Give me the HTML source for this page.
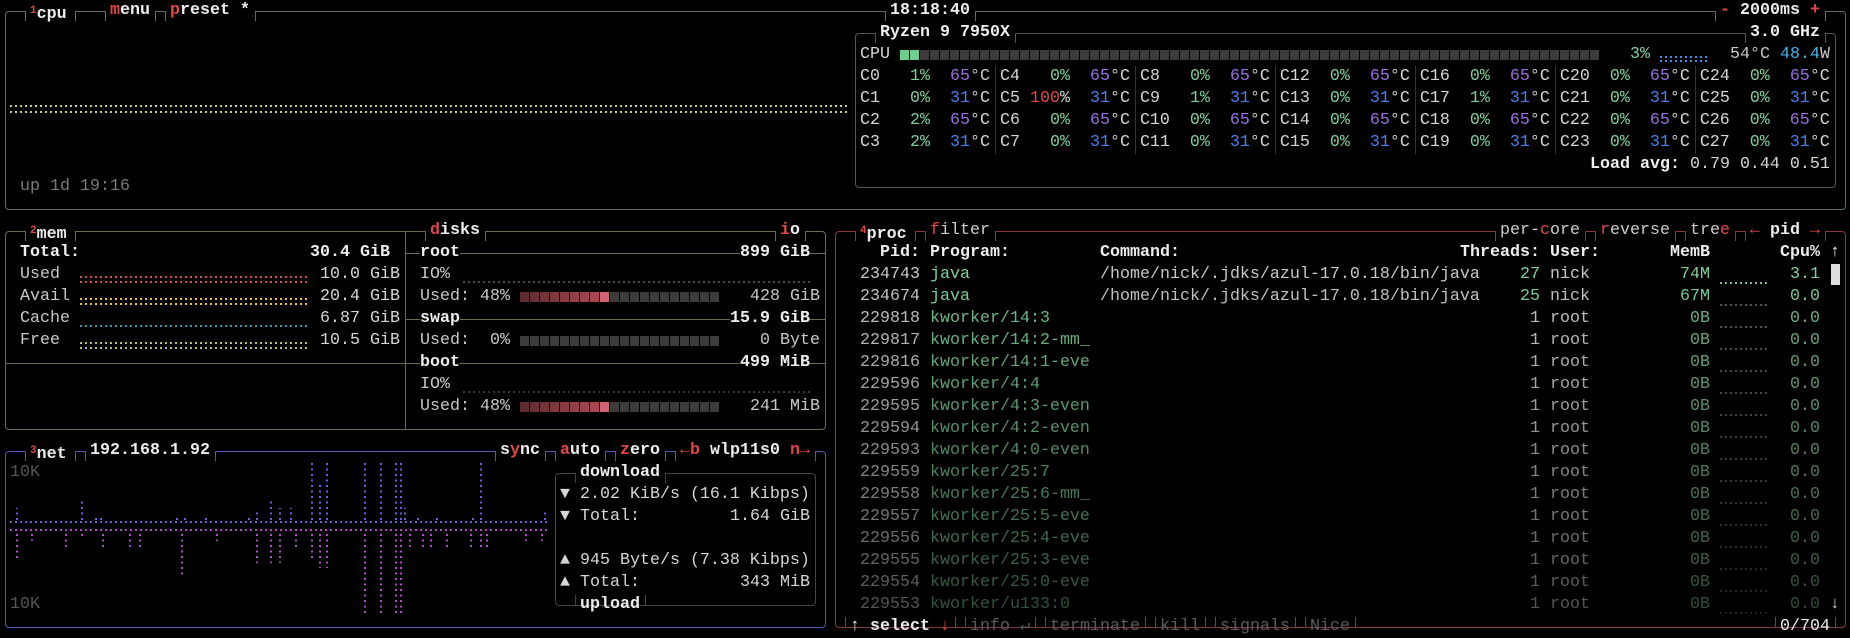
<!DOCTYPE html>
<html><head><meta charset="utf-8"><style>
html,body{margin:0;padding:0;background:#000;width:1850px;height:638px;overflow:hidden}
body{position:relative;font-family:"Liberation Mono","DejaVu Sans Mono",monospace;font-size:16.667px;color:#d6d6d6}
.t{position:absolute;white-space:pre;line-height:22px;height:22px}
.r{text-align:right}
.box{position:absolute;box-sizing:border-box;border:1px solid;border-radius:4px}
.hl{position:absolute;height:1px}
.vl{position:absolute;width:1px}
.tt{position:absolute;height:10px;box-sizing:border-box;border-style:solid;border-width:0 1px;background:#000}
.tt>span{position:absolute;left:4px;top:-11px;line-height:22px;white-space:pre;font-weight:bold;color:#eee}
.bt{position:absolute;height:10px;box-sizing:border-box;border-style:solid;border-width:0 1px;background:#000}
.bt>span{position:absolute;left:4px;top:-1px;line-height:22px;white-space:pre;color:#5c5c5c}
.sup{font-size:11px;vertical-align:5px;color:#e04848}
.red{color:#e04848}
.w{color:#eee;font-weight:bold}
.g{color:#7fcf9a}.tp{color:#9a6fe0}.tb{color:#4a7fee}.dg{color:#c8c8c8}
.bg{background:#000}
.dot{position:absolute;height:2px;background-image:linear-gradient(to right,var(--c) 0 2px,transparent 2px 5px);background-size:5px 2px}
.bar{position:absolute;height:10px;background-image:repeating-linear-gradient(to right,#3c3c3c 0 9px,#000 9px 10px)}
.pr{position:absolute;left:0;width:1850px;height:22px}
.pr .t{top:0}
</style></head><body>

<!-- CPU box -->
<div class="box" style="left:5px;top:11px;width:1841px;height:199px;border-color:#5d6f60"></div>
<div class="box" style="left:855px;top:33px;width:981px;height:155px;border-color:#4f5a52"></div>
<div class="tt" style="left:25px;top:11px;width:51px;border-color:#5d6f60"><span><span class="sup">1</span>cpu</span></div>
<div class="tt" style="left:105px;top:11px;width:51px;border-color:#5d6f60"><span><span class="red">m</span>enu</span></div>
<div class="tt" style="left:165px;top:11px;width:91px;border-color:#5d6f60"><span><span class="red">p</span>reset *</span></div>
<div class="tt" style="left:885px;top:11px;width:91px;border-color:#5d6f60"><span>18:18:40</span></div>
<div class="tt" style="left:1715px;top:11px;width:111px;border-color:#5d6f60"><span><span class="red">-</span> 2000ms <span class="red">+</span></span></div>
<div class="tt" style="left:875px;top:33px;width:141px;border-color:#4f5a52"><span>Ryzen 9 7950X</span></div>
<div class="tt" style="left:1745px;top:33px;width:81px;border-color:#4f5a52"><span>3.0 GHz</span></div>

<div class="dot" style="--c:#c4cf80;left:10px;top:105px;width:840px"></div>
<div class="dot" style="--c:#c4cf80;left:10px;top:111px;width:840px"></div>
<span class="t" style="left:20px;top:176px;color:#7a7a7a">up 1d 19:16</span>

<span class="t" style="left:860px;top:44px">CPU</span>
<div class="bar" style="left:900px;top:50px;width:700px"></div>
<div class="bar" style="left:900px;top:50px;width:19px;background-image:repeating-linear-gradient(to right,#6fcf8f 0 9px,#000 9px 10px)"></div>
<span class="t g" style="left:1630px;top:44px">3%</span>
<div class="dot" style="--c:#3a8fe8;left:1660px;top:56px;width:50px"></div>
<div class="dot" style="--c:#3a8fe8;left:1660px;top:60px;width:50px"></div>
<span class="t dg" style="left:1730px;top:44px">54°C <span style="color:#3fb4ec">48.4</span>W</span>

<span class="t" style="left:860px;top:66px">C0   <span class="g">1%</span>  <span class="tp">65</span><span class="dg">°C</span> C4   <span class="g">0%</span>  <span class="tp">65</span>°C C8   <span class="g">0%</span>  <span class="tp">65</span>°C C12  <span class="g">0%</span>  <span class="tp">65</span>°C C16  <span class="g">0%</span>  <span class="tp">65</span>°C C20  <span class="g">0%</span>  <span class="tp">65</span>°C C24  <span class="g">0%</span>  <span class="tp">65</span>°C</span>
<span class="t" style="left:860px;top:88px">C1   <span class="g">0%</span>  <span class="tb">31</span>°C C5 <span class="red">100</span>%  <span class="tb">31</span>°C C9   <span class="g">1%</span>  <span class="tb">31</span>°C C13  <span class="g">0%</span>  <span class="tb">31</span>°C C17  <span class="g">1%</span>  <span class="tb">31</span>°C C21  <span class="g">0%</span>  <span class="tb">31</span>°C C25  <span class="g">0%</span>  <span class="tb">31</span>°C</span>
<span class="t" style="left:860px;top:110px">C2   <span class="g">2%</span>  <span class="tp">65</span>°C C6   <span class="g">0%</span>  <span class="tp">65</span>°C C10  <span class="g">0%</span>  <span class="tp">65</span>°C C14  <span class="g">0%</span>  <span class="tp">65</span>°C C18  <span class="g">0%</span>  <span class="tp">65</span>°C C22  <span class="g">0%</span>  <span class="tp">65</span>°C C26  <span class="g">0%</span>  <span class="tp">65</span>°C</span>
<span class="t" style="left:860px;top:132px">C3   <span class="g">2%</span>  <span class="tb">31</span>°C C7   <span class="g">0%</span>  <span class="tb">31</span>°C C11  <span class="g">0%</span>  <span class="tb">31</span>°C C15  <span class="g">0%</span>  <span class="tb">31</span>°C C19  <span class="g">0%</span>  <span class="tb">31</span>°C C23  <span class="g">0%</span>  <span class="tb">31</span>°C C27  <span class="g">0%</span>  <span class="tb">31</span>°C</span>
<div class="vl" style="left:995px;top:66px;height:88px;background:#333"></div>
<div class="vl" style="left:1135px;top:66px;height:88px;background:#333"></div>
<div class="vl" style="left:1275px;top:66px;height:88px;background:#333"></div>
<div class="vl" style="left:1415px;top:66px;height:88px;background:#333"></div>
<div class="vl" style="left:1555px;top:66px;height:88px;background:#333"></div>
<div class="vl" style="left:1695px;top:66px;height:88px;background:#333"></div>
<span class="t" style="left:1590px;top:154px"><span class="w">Load avg:</span> 0.79 0.44 0.51</span>

<!-- MEM box -->
<div class="box" style="left:5px;top:231px;width:821px;height:199px;border-color:#6c6c4c"></div>
<div class="vl" style="left:405px;top:231px;height:198px;background:#6c6c4c"></div>
<div class="hl" style="left:5px;top:363px;width:400px;background:#6c6c4c"></div>
<div class="hl" style="left:405px;top:253px;width:420px;background:#6c6c4c"></div>
<div class="hl" style="left:405px;top:319px;width:420px;background:#6c6c4c"></div>
<div class="hl" style="left:405px;top:363px;width:420px;background:#6c6c4c"></div>
<div class="tt" style="left:25px;top:231px;width:51px;border-color:#6c6c4c"><span><span class="sup">2</span>mem</span></div>
<div class="tt" style="left:425px;top:231px;width:61px;border-color:#6c6c4c"><span><span class="red">d</span>isks</span></div>
<div class="tt" style="left:775px;top:231px;width:31px;border-color:#6c6c4c"><span><span class="red">i</span>o</span></div>

<span class="t w" style="left:20px;top:242px">Total:</span>
<span class="t w" style="left:310px;top:242px">30.4 GiB</span>
<span class="t dg" style="left:20px;top:264px">Used</span>
<div class="dot" style="--c:#d65050;left:80px;top:276px;width:230px"></div>
<div class="dot" style="--c:#d65050;left:80px;top:281px;width:230px"></div>
<span class="t" style="left:320px;top:264px">10.0 GiB</span>
<span class="t dg" style="left:20px;top:286px">Avail</span>
<div class="dot" style="--c:#e8c040;left:80px;top:298px;width:230px"></div>
<div class="dot" style="--c:#e8c040;left:80px;top:303px;width:230px"></div>
<span class="t" style="left:320px;top:286px">20.4 GiB</span>
<span class="t dg" style="left:20px;top:308px">Cache</span>
<div class="dot" style="--c:#3a98b8;left:80px;top:325px;width:230px"></div>
<span class="t" style="left:320px;top:308px">6.87 GiB</span>
<span class="t dg" style="left:20px;top:330px">Free</span>
<div class="dot" style="--c:#b4c468;left:80px;top:342px;width:230px"></div>
<div class="dot" style="--c:#b4c468;left:80px;top:347px;width:230px"></div>
<span class="t" style="left:320px;top:330px">10.5 GiB</span>

<span class="t w bg" style="left:420px;top:242px">root</span>
<span class="t w bg" style="left:740px;top:242px">899 GiB</span>
<span class="t dg" style="left:420px;top:264px">IO%</span>
<div class="dot" style="--c:#4a4a4a;left:463px;top:281px;width:350px"></div>
<span class="t dg" style="left:420px;top:286px">Used: 48%</span>
<div class="bar" style="left:520px;top:292px;width:200px"></div>
<div class="bar" style="left:520px;top:292px;width:89px;background-image:repeating-linear-gradient(to right,transparent 0 9px,#000 9px 10px),linear-gradient(to right,#5a2a2e,#b84a5a)"></div>
<div style="position:absolute;left:600px;top:292px;width:9px;height:10px;background:#d06474"></div>
<span class="t dg" style="left:750px;top:286px">428 GiB</span>
<span class="t w bg" style="left:420px;top:308px">swap</span>
<span class="t w bg" style="left:730px;top:308px">15.9 GiB</span>
<span class="t dg" style="left:420px;top:330px">Used:  0%</span>
<div class="bar" style="left:520px;top:336px;width:200px"></div>
<span class="t dg" style="left:760px;top:330px">0 Byte</span>
<span class="t w bg" style="left:420px;top:352px">boot</span>
<span class="t w bg" style="left:740px;top:352px">499 MiB</span>
<span class="t dg" style="left:420px;top:374px">IO%</span>
<div class="dot" style="--c:#3a3a3a;left:463px;top:391px;width:350px"></div>
<span class="t dg" style="left:420px;top:396px">Used: 48%</span>
<div class="bar" style="left:520px;top:402px;width:200px"></div>
<div class="bar" style="left:520px;top:402px;width:89px;background-image:repeating-linear-gradient(to right,transparent 0 9px,#000 9px 10px),linear-gradient(to right,#5a2a2e,#b84a5a)"></div>
<div style="position:absolute;left:600px;top:402px;width:9px;height:10px;background:#d06474"></div>
<span class="t dg" style="left:750px;top:396px">241 MiB</span>

<!-- NET box -->
<div class="box" style="left:5px;top:451px;width:821px;height:177px;border-color:#5a58a8"></div>
<div class="tt" style="left:25px;top:451px;width:51px;border-color:#5a58a8"><span><span class="sup">3</span>net</span></div>
<div class="tt" style="left:85px;top:451px;width:131px;border-color:#5a58a8"><span>192.168.1.92</span></div>
<div class="tt" style="left:495px;top:451px;width:51px;border-color:#5a58a8"><span>s<span class="red">y</span>nc</span></div>
<div class="tt" style="left:555px;top:451px;width:51px;border-color:#5a58a8"><span><span class="red">a</span>uto</span></div>
<div class="tt" style="left:615px;top:451px;width:51px;border-color:#5a58a8"><span><span class="red">z</span>ero</span></div>
<div class="tt" style="left:675px;top:451px;width:141px;border-color:#5a58a8"><span><span class="red">←b</span> wlp11s0 <span class="red">n→</span></span></div>
<span class="t" style="left:10px;top:462px;color:#555">10K</span>
<span class="t" style="left:10px;top:594px;color:#555">10K</span>
<svg style="position:absolute;left:0;top:0" width="560" height="638">
<g stroke="#6a62dc" stroke-width="2" stroke-dasharray="2 3.5">
<line x1="10" y1="522" x2="550" y2="522" stroke-dasharray="2 3"/>
<line x1="17" y1="520" x2="17" y2="508"/><line x1="82" y1="520" x2="82" y2="501"/><line x1="96" y1="520" x2="96" y2="515"/><line x1="101" y1="520" x2="101" y2="515"/><line x1="177" y1="520" x2="177" y2="515"/><line x1="185" y1="520" x2="185" y2="515"/><line x1="206" y1="520" x2="206" y2="515"/><line x1="249" y1="520" x2="249" y2="515"/><line x1="257" y1="520" x2="257" y2="512"/><line x1="271" y1="520" x2="271" y2="501"/><line x1="280" y1="520" x2="280" y2="508"/><line x1="291" y1="520" x2="291" y2="508"/><line x1="312" y1="520" x2="312" y2="463"/><line x1="320" y1="520" x2="320" y2="485"/><line x1="327" y1="520" x2="327" y2="463"/><line x1="365" y1="520" x2="365" y2="463"/><line x1="381" y1="520" x2="381" y2="463"/><line x1="396" y1="520" x2="396" y2="463"/><line x1="401" y1="520" x2="401" y2="463"/><line x1="405" y1="520" x2="405" y2="508"/><line x1="418" y1="520" x2="418" y2="515"/><line x1="437" y1="520" x2="437" y2="515"/><line x1="473" y1="520" x2="473" y2="515"/><line x1="481" y1="520" x2="481" y2="463"/><line x1="545" y1="520" x2="545" y2="512"/>
</g>
<g stroke="#b04cc4" stroke-width="2" stroke-dasharray="2 3.5">
<line x1="10" y1="530" x2="550" y2="530" stroke-dasharray="2 3"/>
<line x1="17" y1="534" x2="17" y2="558"/><line x1="32" y1="534" x2="32" y2="541"/><line x1="66" y1="534" x2="66" y2="547"/><line x1="82" y1="534" x2="82" y2="537"/><line x1="103" y1="534" x2="103" y2="547"/><line x1="130" y1="534" x2="130" y2="547"/><line x1="140" y1="534" x2="140" y2="547"/><line x1="182" y1="534" x2="182" y2="575"/><line x1="217" y1="534" x2="217" y2="541"/><line x1="257" y1="534" x2="257" y2="563"/><line x1="271" y1="534" x2="271" y2="563"/><line x1="280" y1="534" x2="280" y2="563"/><line x1="296" y1="534" x2="296" y2="547"/><line x1="312" y1="534" x2="312" y2="560"/><line x1="320" y1="534" x2="320" y2="568"/><line x1="327" y1="534" x2="327" y2="568"/><line x1="365" y1="534" x2="365" y2="613"/><line x1="381" y1="534" x2="381" y2="613"/><line x1="396" y1="534" x2="396" y2="613"/><line x1="401" y1="534" x2="401" y2="613"/><line x1="410" y1="534" x2="410" y2="547"/><line x1="423" y1="534" x2="423" y2="547"/><line x1="431" y1="534" x2="431" y2="547"/><line x1="447" y1="534" x2="447" y2="547"/><line x1="471" y1="534" x2="471" y2="547"/><line x1="481" y1="534" x2="481" y2="547"/><line x1="487" y1="534" x2="487" y2="547"/><line x1="526" y1="534" x2="526" y2="541"/><line x1="542" y1="534" x2="542" y2="541"/>
</g></svg>
<div class="box" style="left:555px;top:473px;width:261px;height:133px;border-color:#444"></div>
<div class="tt" style="left:575px;top:473px;width:91px;border-color:#444"><span>download</span></div>
<div class="bt" style="left:575px;top:595px;width:71px;border-color:#444"><span class="w" style="color:#eee">upload</span></div>
<span class="t" style="left:560px;top:484px">▼ 2.02 KiB/s (16.1 Kibps)</span>
<span class="t" style="left:560px;top:506px">▼ Total:</span>
<span class="t" style="left:730px;top:506px">1.64 GiB</span>
<span class="t" style="left:560px;top:550px">▲ 945 Byte/s (7.38 Kibps)</span>
<span class="t" style="left:560px;top:572px">▲ Total:</span>
<span class="t" style="left:740px;top:572px">343 MiB</span>

<!-- PROC box -->
<div class="box" style="left:835px;top:231px;width:1011px;height:397px;border-color:#883a3a"></div>
<div class="tt" style="left:855px;top:231px;width:61px;border-color:#883a3a"><span><span class="sup">4</span>proc</span></div>
<div class="tt" style="left:925px;top:231px;width:71px;border-color:#883a3a"><span style="color:#ccc;font-weight:normal"><span class="red">f</span>ilter</span></div>
<div class="tt" style="left:1495px;top:231px;width:91px;border-color:#883a3a"><span style="color:#ccc;font-weight:normal">per-<span class="red">c</span>ore</span></div>
<div class="tt" style="left:1595px;top:231px;width:81px;border-color:#883a3a"><span style="color:#ccc;font-weight:normal"><span class="red">r</span>everse</span></div>
<div class="tt" style="left:1685px;top:231px;width:51px;border-color:#883a3a"><span style="color:#ccc;font-weight:normal">tre<span class="red">e</span></span></div>
<div class="tt" style="left:1745px;top:231px;width:81px;border-color:#883a3a"><span><span class="red">←</span> pid <span class="red">→</span></span></div>

<div class="bt" style="left:845px;top:617px;width:111px;border-color:#883a3a"><span style="color:#eee">↑ <b>select</b> <span class="red">↓</span></span></div>
<div class="bt" style="left:965px;top:617px;width:71px;border-color:#883a3a"><span>info ↵</span></div>
<div class="bt" style="left:1045px;top:617px;width:101px;border-color:#883a3a"><span>terminate</span></div>
<div class="bt" style="left:1155px;top:617px;width:51px;border-color:#883a3a"><span>kill</span></div>
<div class="bt" style="left:1215px;top:617px;width:81px;border-color:#883a3a"><span>signals</span></div>
<div class="bt" style="left:1305px;top:617px;width:51px;border-color:#883a3a"><span>Nice</span></div>
<div class="bt" style="left:1775px;top:617px;width:61px;border-color:#883a3a"><span style="color:#eee">0/704</span></div>

<div class="pr" style="top:242px;font-weight:bold;color:#eee">
<span class="t r" style="left:850px;width:70px">Pid:</span><span class="t" style="left:930px">Program:</span><span class="t" style="left:1100px">Command:</span><span class="t r" style="left:1450px;width:90px">Threads:</span><span class="t" style="left:1550px">User:</span><span class="t r" style="left:1650px;width:60px">MemB</span><span class="t r" style="left:1770px;width:50px">Cpu%</span><span class="t" style="left:1830px">↑</span></div>
<div style="position:absolute;left:1831px;top:264px;width:9px;height:21px;background:#ddd"></div>
<span class="t" style="left:1830px;top:594px">↓</span>

<div class="pr" style="top:264px"><span class="t r dg" style="left:850px;width:70px">234743</span><span class="t" style="left:930px;color:#7fd39a">java</span><span class="t dg" style="left:1100px">/home/nick/.jdks/azul-17.0.18/bin/java</span><span class="t r g" style="left:1480px;width:60px">27</span><span class="t dg" style="left:1550px">nick</span><span class="t r g" style="left:1650px;width:60px">74M</span><div class="dot" style="--c:#7fbf8f;left:1720px;top:18px;width:50px"></div><span class="t r g" style="left:1780px;width:40px">3.1</span></div>
<div class="pr" style="top:286px;opacity:.97"><span class="t r dg" style="left:850px;width:70px">234674</span><span class="t" style="left:930px;color:#7fd39a">java</span><span class="t dg" style="left:1100px">/home/nick/.jdks/azul-17.0.18/bin/java</span><span class="t r g" style="left:1480px;width:60px">25</span><span class="t dg" style="left:1550px">nick</span><span class="t r g" style="left:1650px;width:60px">67M</span><div class="dot" style="--c:#555;left:1720px;top:18px;width:50px"></div><span class="t r g" style="left:1780px;width:40px">0.0</span></div>
<div class="pr" style="top:308px;opacity:.94"><span class="t r dg" style="left:850px;width:70px">229818</span><span class="t" style="left:930px;color:#74c08c">kworker/14:3</span><span class="t r dg" style="left:1480px;width:60px">1</span><span class="t dg" style="left:1550px">root</span><span class="t r" style="left:1650px;width:60px;color:#74b88a">0B</span><div class="dot" style="--c:#555;left:1720px;top:18px;width:50px"></div><span class="t r" style="left:1780px;width:40px;color:#74b88a">0.0</span></div>
<div class="pr" style="top:330px;opacity:.9"><span class="t r dg" style="left:850px;width:70px">229817</span><span class="t" style="left:930px;color:#74c08c">kworker/14:2-mm_</span><span class="t r dg" style="left:1480px;width:60px">1</span><span class="t dg" style="left:1550px">root</span><span class="t r" style="left:1650px;width:60px;color:#74b88a">0B</span><div class="dot" style="--c:#555;left:1720px;top:18px;width:50px"></div><span class="t r" style="left:1780px;width:40px;color:#74b88a">0.0</span></div>
<div class="pr" style="top:352px;opacity:.86"><span class="t r dg" style="left:850px;width:70px">229816</span><span class="t" style="left:930px;color:#74c08c">kworker/14:1-eve</span><span class="t r dg" style="left:1480px;width:60px">1</span><span class="t dg" style="left:1550px">root</span><span class="t r" style="left:1650px;width:60px;color:#74b88a">0B</span><div class="dot" style="--c:#555;left:1720px;top:18px;width:50px"></div><span class="t r" style="left:1780px;width:40px;color:#74b88a">0.0</span></div>
<div class="pr" style="top:374px;opacity:.82"><span class="t r dg" style="left:850px;width:70px">229596</span><span class="t" style="left:930px;color:#74c08c">kworker/4:4</span><span class="t r dg" style="left:1480px;width:60px">1</span><span class="t dg" style="left:1550px">root</span><span class="t r" style="left:1650px;width:60px;color:#74b88a">0B</span><div class="dot" style="--c:#555;left:1720px;top:18px;width:50px"></div><span class="t r" style="left:1780px;width:40px;color:#74b88a">0.0</span></div>
<div class="pr" style="top:396px;opacity:.78"><span class="t r dg" style="left:850px;width:70px">229595</span><span class="t" style="left:930px;color:#74c08c">kworker/4:3-even</span><span class="t r dg" style="left:1480px;width:60px">1</span><span class="t dg" style="left:1550px">root</span><span class="t r" style="left:1650px;width:60px;color:#74b88a">0B</span><div class="dot" style="--c:#555;left:1720px;top:18px;width:50px"></div><span class="t r" style="left:1780px;width:40px;color:#74b88a">0.0</span></div>
<div class="pr" style="top:418px;opacity:.74"><span class="t r dg" style="left:850px;width:70px">229594</span><span class="t" style="left:930px;color:#74c08c">kworker/4:2-even</span><span class="t r dg" style="left:1480px;width:60px">1</span><span class="t dg" style="left:1550px">root</span><span class="t r" style="left:1650px;width:60px;color:#74b88a">0B</span><div class="dot" style="--c:#555;left:1720px;top:18px;width:50px"></div><span class="t r" style="left:1780px;width:40px;color:#74b88a">0.0</span></div>
<div class="pr" style="top:440px;opacity:.7"><span class="t r dg" style="left:850px;width:70px">229593</span><span class="t" style="left:930px;color:#74c08c">kworker/4:0-even</span><span class="t r dg" style="left:1480px;width:60px">1</span><span class="t dg" style="left:1550px">root</span><span class="t r" style="left:1650px;width:60px;color:#74b88a">0B</span><div class="dot" style="--c:#555;left:1720px;top:18px;width:50px"></div><span class="t r" style="left:1780px;width:40px;color:#74b88a">0.0</span></div>
<div class="pr" style="top:462px;opacity:.66"><span class="t r dg" style="left:850px;width:70px">229559</span><span class="t" style="left:930px;color:#74c08c">kworker/25:7</span><span class="t r dg" style="left:1480px;width:60px">1</span><span class="t dg" style="left:1550px">root</span><span class="t r" style="left:1650px;width:60px;color:#74b88a">0B</span><div class="dot" style="--c:#555;left:1720px;top:18px;width:50px"></div><span class="t r" style="left:1780px;width:40px;color:#74b88a">0.0</span></div>
<div class="pr" style="top:484px;opacity:.62"><span class="t r dg" style="left:850px;width:70px">229558</span><span class="t" style="left:930px;color:#74c08c">kworker/25:6-mm_</span><span class="t r dg" style="left:1480px;width:60px">1</span><span class="t dg" style="left:1550px">root</span><span class="t r" style="left:1650px;width:60px;color:#74b88a">0B</span><div class="dot" style="--c:#555;left:1720px;top:18px;width:50px"></div><span class="t r" style="left:1780px;width:40px;color:#74b88a">0.0</span></div>
<div class="pr" style="top:506px;opacity:.58"><span class="t r dg" style="left:850px;width:70px">229557</span><span class="t" style="left:930px;color:#74c08c">kworker/25:5-eve</span><span class="t r dg" style="left:1480px;width:60px">1</span><span class="t dg" style="left:1550px">root</span><span class="t r" style="left:1650px;width:60px;color:#74b88a">0B</span><div class="dot" style="--c:#555;left:1720px;top:18px;width:50px"></div><span class="t r" style="left:1780px;width:40px;color:#74b88a">0.0</span></div>
<div class="pr" style="top:528px;opacity:.54"><span class="t r dg" style="left:850px;width:70px">229556</span><span class="t" style="left:930px;color:#74c08c">kworker/25:4-eve</span><span class="t r dg" style="left:1480px;width:60px">1</span><span class="t dg" style="left:1550px">root</span><span class="t r" style="left:1650px;width:60px;color:#74b88a">0B</span><div class="dot" style="--c:#555;left:1720px;top:18px;width:50px"></div><span class="t r" style="left:1780px;width:40px;color:#74b88a">0.0</span></div>
<div class="pr" style="top:550px;opacity:.5"><span class="t r dg" style="left:850px;width:70px">229555</span><span class="t" style="left:930px;color:#74c08c">kworker/25:3-eve</span><span class="t r dg" style="left:1480px;width:60px">1</span><span class="t dg" style="left:1550px">root</span><span class="t r" style="left:1650px;width:60px;color:#74b88a">0B</span><div class="dot" style="--c:#555;left:1720px;top:18px;width:50px"></div><span class="t r" style="left:1780px;width:40px;color:#74b88a">0.0</span></div>
<div class="pr" style="top:572px;opacity:.46"><span class="t r dg" style="left:850px;width:70px">229554</span><span class="t" style="left:930px;color:#74c08c">kworker/25:0-eve</span><span class="t r dg" style="left:1480px;width:60px">1</span><span class="t dg" style="left:1550px">root</span><span class="t r" style="left:1650px;width:60px;color:#74b88a">0B</span><div class="dot" style="--c:#555;left:1720px;top:18px;width:50px"></div><span class="t r" style="left:1780px;width:40px;color:#74b88a">0.0</span></div>
<div class="pr" style="top:594px;opacity:.42"><span class="t r dg" style="left:850px;width:70px">229553</span><span class="t" style="left:930px;color:#74c08c">kworker/u133:0</span><span class="t r dg" style="left:1480px;width:60px">1</span><span class="t dg" style="left:1550px">root</span><span class="t r" style="left:1650px;width:60px;color:#74b88a">0B</span><div class="dot" style="--c:#555;left:1720px;top:18px;width:50px"></div><span class="t r" style="left:1780px;width:40px;color:#74b88a">0.0</span></div>

</body></html>
